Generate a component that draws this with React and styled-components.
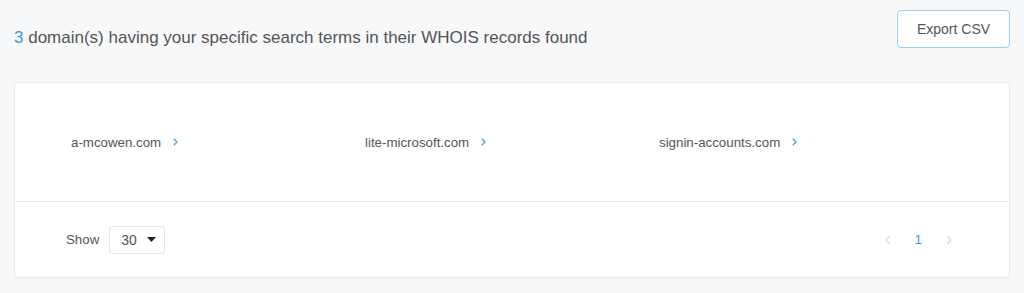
import React from "react";
import styled, { createGlobalStyle } from "styled-components";

const Global = createGlobalStyle`
  html, body { margin: 0; padding: 0; background: #f7f8fa; }
  body { font-family: "Liberation Sans", Arial, sans-serif; color: #555; }
`;

const Page = styled.div`
  width: 1024px;
  height: 293px;
  box-sizing: border-box;
  padding: 10px 14px 0 14px;
  background: #f7f8fa;
`;

const Header = styled.div`
  display: flex;
  justify-content: space-between;
  align-items: flex-start;
  height: 72px;
`;

const Title = styled.h1`
  margin: 18px 0 0 0;
  font-size: 17px;
  font-weight: normal;
  line-height: 20px;
  color: #555;
`;

const Count = styled.span`
  color: #3b9ae1;
`;

const ExportButton = styled.button`
  width: 113px;
  height: 38px;
  background: #fff;
  border: 1px solid #9dcbf2;
  border-radius: 4px;
  font-family: "Liberation Sans", Arial, sans-serif;
  font-size: 14px;
  color: #555;
  cursor: pointer;
`;

const Card = styled.div`
  background: #fff;
  border: 1px solid #e6e8eb;
  border-radius: 4px;
  box-shadow: 0 1px 2px rgba(0, 0, 0, 0.04);
  width: 996px;
  box-sizing: border-box;
`;

const List = styled.div`
  height: 118px;
  display: grid;
  grid-template-columns: repeat(3, 294px);
  align-items: center;
  padding-left: 56px;
  border-bottom: 1px solid #e6e8eb;
`;

const Domain = styled.a`
  display: flex;
  align-items: center;
  gap: 12px;
  font-size: 13.3px;
  color: #555;
  text-decoration: none;
`;

const Footer = styled.div`
  height: 75px;
  display: flex;
  align-items: center;
  justify-content: space-between;
  padding: 0 56px 0 51px;
`;

const ShowGroup = styled.div`
  display: flex;
  align-items: center;
  gap: 10px;
  font-size: 13.3px;
  color: #555;
`;

const Select = styled.div`
  width: 56px;
  height: 28px;
  box-sizing: border-box;
  border: 1px solid #e3e5e8;
  border-radius: 3px;
  display: flex;
  align-items: center;
  justify-content: space-between;
  padding: 0 8px 0 11px;
  font-size: 14px;
  color: #555;
`;

const Pager = styled.div`
  display: flex;
  align-items: center;
  gap: 24px;
  font-size: 13.3px;
`;

const PageNum = styled.span`
  color: #3b9ae1;
`;

const Chevron = ({ dir = "right", color = "#3b9ae1", size = 8 }) => (
  <svg width={size * 0.7} height={size} viewBox="0 0 7 10" fill="none">
    <path
      d={dir === "right" ? "M1.5 1.5 L5 5 L1.5 8.5" : "M5.5 1.5 L2 5 L5.5 8.5"}
      stroke={color}
      strokeWidth="1.6"
      strokeLinecap="round"
      strokeLinejoin="round"
    />
  </svg>
);

const Caret = () => (
  <svg width="9" height="5" viewBox="0 0 9 5">
    <path d="M0 0 L9 0 L4.5 5 Z" fill="#222" />
  </svg>
);

const domains = ["a-mcowen.com", "lite-microsoft.com", "signin-accounts.com"];

export default function App() {
  return (
    <>
      <Global />
      <Page>
        <Header>
          <Title>
            <Count>3</Count> domain(s) having your specific search terms in their WHOIS records found
          </Title>
          <ExportButton>Export CSV</ExportButton>
        </Header>
        <Card>
          <List>
            {domains.map((d) => (
              <Domain key={d} href="#">
                {d}
                <Chevron />
              </Domain>
            ))}
          </List>
          <Footer>
            <ShowGroup>
              Show
              <Select>
                30
                <Caret />
              </Select>
            </ShowGroup>
            <Pager>
              <Chevron dir="left" color="#c5e0f6" size={10} />
              <PageNum>1</PageNum>
              <Chevron dir="right" color="#c5e0f6" size={10} />
            </Pager>
          </Footer>
        </Card>
      </Page>
    </>
  );
}
